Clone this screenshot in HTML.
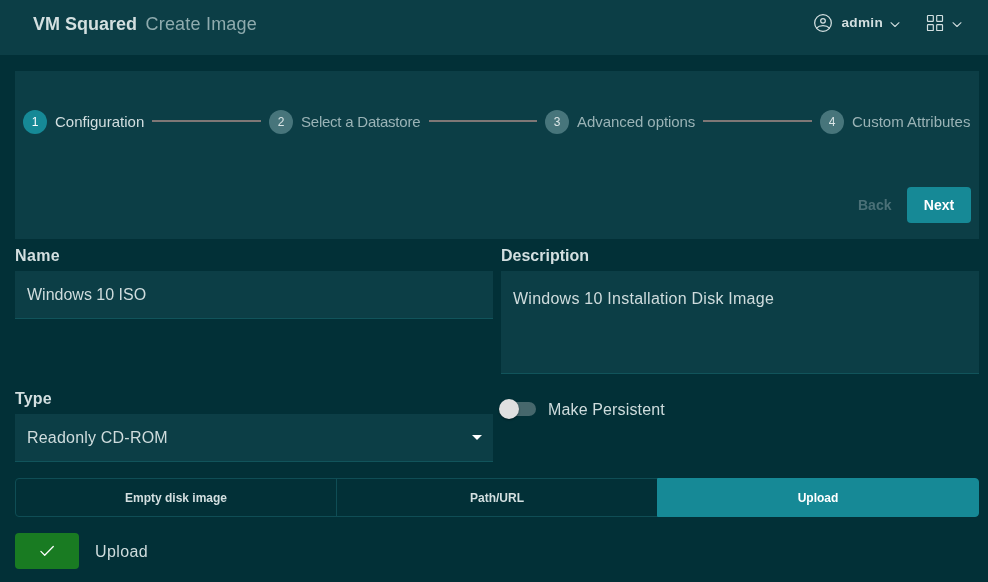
<!DOCTYPE html>
<html lang="en">
<head>
<meta charset="utf-8">
<title>VM Squared - Create Image</title>
<style>
*{box-sizing:border-box;margin:0;padding:0}
html,body{width:988px;height:582px;overflow:hidden}
body{background:#023037;font-family:"Liberation Sans",sans-serif;color:#cfdcdd;position:relative}
#root{position:absolute;left:0;top:0;width:988px;height:582px;will-change:transform}
.abs{position:absolute;white-space:nowrap}
#header{left:0;top:0;width:988px;height:55px;background:#0c3e46}
#brand{left:33px;top:14px;font-size:18px;line-height:21px;font-weight:bold;color:#d3dfe0}
#title{left:145.500px;top:14px;letter-spacing:.2px;font-size:18px;line-height:21px;color:#8fabae}
#admin{left:841.500px;top:14px;font-size:13.600px;line-height:18px;letter-spacing:.3px;font-weight:bold;color:#d3dfe0}
#panel{left:15px;top:71px;width:964px;height:168px;background:#0c3e46}
.circ{width:24px;height:24px;border-radius:50%;background:#47757b;color:#dbe6e7;font-size:12px;line-height:24px;text-align:center;top:110px}
.circ.on{background:#168996;color:#fff}
.slabel{top:113px;font-size:15px;line-height:18px;color:#9ab3b6}
.slabel.on{color:#d3dfe0}
.conn{top:120px;height:2px;background:#7f7776}
#back{left:858px;top:196px;font-size:14px;line-height:18px;font-weight:bold;color:#4a7077}
#next{left:907px;top:187px;width:64px;height:36px;border-radius:4px;background:#168996;color:#fff;font-size:14px;line-height:36px;font-weight:bold;text-align:center}
.flabel{font-size:16px;line-height:20px;font-weight:bold;color:#d3dfe0}
.field{background:#0c3e46;border-bottom:1px solid #11545b;font-size:16px;line-height:20px;color:#cfdcdd;padding-left:12px}
#seg{left:15px;top:478px;width:964px;height:39px}
.segb{top:0;height:39px;font-size:12px;line-height:39px;font-weight:bold;text-align:center;color:#d3dfe0}
#upbtn{left:15px;top:533px;width:64px;height:36px;border-radius:4px;background:#197b22}
</style>
</head>
<body>
<div id="root">
<div id="header" class="abs"></div>
<div id="brand" class="abs">VM Squared</div>
<div id="title" class="abs">Create Image</div>

<svg class="abs" style="left:813px;top:13px" width="20" height="20" viewBox="0 0 24 24" fill="none" stroke="#d3dfe0" stroke-width="1.5" stroke-linecap="round" stroke-linejoin="round"><circle cx="12" cy="12" r="10"/><circle cx="12" cy="9.4" r="2.8"/><path d="M4.2 18.1C6 16.2 8.8 15.2 12 15.2s6 1 7.800 2.900"/></svg>
<div id="admin" class="abs">admin</div>
<svg class="abs" style="left:890px;top:21px" width="10" height="8" viewBox="0 0 10 8" fill="none" stroke="#d3dfe0" stroke-width="1.050" stroke-linecap="round" stroke-linejoin="round"><path d="M1 1.700 5 5.500 9 1.700"/></svg>
<svg class="abs" style="left:926px;top:14px" width="18" height="18" viewBox="0 0 18 18" fill="none" stroke="#d3dfe0" stroke-width="1.200"><rect x="1.500" y="1.500" width="5.800" height="5.800" rx=".6"/><rect x="10.700" y="1.500" width="5.800" height="5.800" rx=".6"/><rect x="1.500" y="10.700" width="5.800" height="5.800" rx=".6"/><rect x="10.700" y="10.700" width="5.800" height="5.800" rx=".6"/></svg>
<svg class="abs" style="left:952px;top:21px" width="10" height="8" viewBox="0 0 10 8" fill="none" stroke="#d3dfe0" stroke-width="1.050" stroke-linecap="round" stroke-linejoin="round"><path d="M1 1.700 5 5.500 9 1.700"/></svg>

<div id="panel" class="abs"></div>
<div class="abs circ on" style="left:23px">1</div>
<div class="abs slabel on" style="left:55px">Configuration</div>
<div class="abs conn" style="left:152px;width:109px"></div>
<div class="abs circ" style="left:269px">2</div>
<div class="abs slabel" style="left:301px;letter-spacing:-0.23px">Select a Datastore</div>
<div class="abs conn" style="left:429px;width:108px"></div>
<div class="abs circ" style="left:545px">3</div>
<div class="abs slabel" style="left:577px;letter-spacing:-0.06px">Advanced options</div>
<div class="abs conn" style="left:703px;width:109px"></div>
<div class="abs circ" style="left:820px">4</div>
<div class="abs slabel" style="left:852px">Custom Attributes</div>
<div id="back" class="abs">Back</div>
<div id="next" class="abs">Next</div>

<div class="abs flabel" style="left:15px;top:246px;letter-spacing:.35px">Name</div>
<div class="abs field" style="left:15px;top:271px;width:478px;height:48px;padding-top:14px">Windows 10 ISO</div>
<div class="abs flabel" style="left:501px;top:246px">Description</div>
<div class="abs field" style="left:501px;top:271px;width:478px;height:103px;padding-top:18px;letter-spacing:.25px">Windows 10 Installation Disk Image</div>

<div class="abs flabel" style="left:15px;top:389px;letter-spacing:.15px">Type</div>
<div class="abs field" style="left:15px;top:414px;width:478px;height:48px;padding-top:14px;letter-spacing:.2px">Readonly CD-ROM</div>
<svg class="abs" style="left:472px;top:435px" width="10" height="5" viewBox="0 0 10 5"><path d="M0 0h10L5 5z" fill="#ffffff"/></svg>

<div class="abs" style="left:503px;top:402px;width:33px;height:14px;border-radius:7px;background:#46676c"></div>
<div class="abs" style="left:499px;top:399px;width:20px;height:20px;border-radius:50%;background:#e0e0e0;box-shadow:0 1px 2px rgba(0,0,0,.4)"></div>
<div class="abs" style="left:548px;top:400px;font-size:16px;line-height:20px;letter-spacing:.14px;color:#cfdcdd">Make Persistent</div>

<div id="seg" class="abs">
  <div class="abs segb" style="left:0;width:322px;border:1px solid #0f4d55;border-radius:4px 0 0 4px">Empty disk image</div>
  <div class="abs segb" style="left:321px;width:321px;border:1px solid #0f4d55;border-right:0">Path/URL</div>
  <div class="abs segb" style="left:642px;width:322px;background:#168996;border:1px solid #168996;border-radius:0 4px 4px 0;color:#fff">Upload</div>
</div>

<div id="upbtn" class="abs"></div>
<svg class="abs" style="left:38px;top:544px" width="18" height="14" viewBox="0 0 18 14" fill="none" stroke="#fff" stroke-width="1.250" stroke-linecap="round" stroke-linejoin="round"><path d="M2.900 7.400 6.700 11.300 15.300 2.500"/></svg>
<div class="abs" style="left:95px;top:542px;font-size:16px;line-height:20px;letter-spacing:.4px;color:#cfdcdd">Upload</div>
</div>
</body>
</html>
